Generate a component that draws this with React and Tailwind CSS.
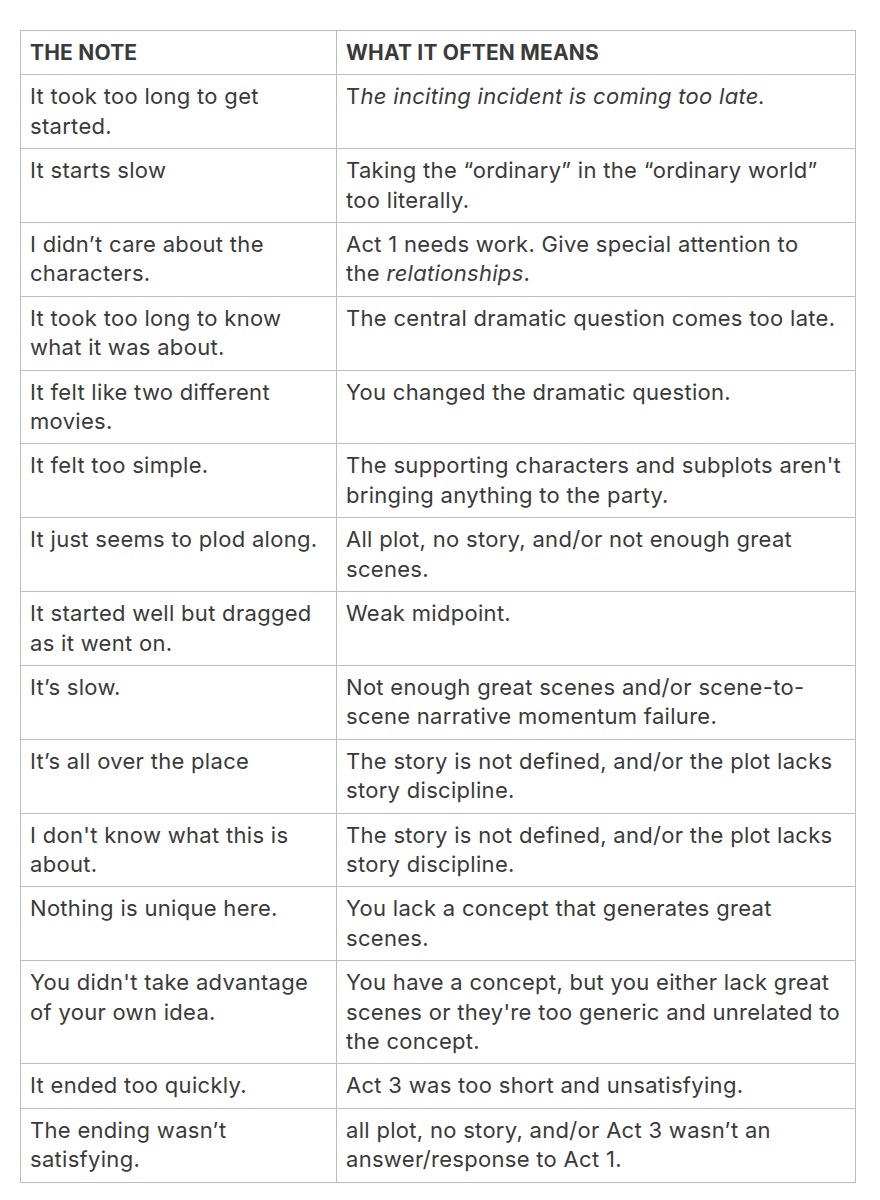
import React from "react";

const rows = [
  [["It took too long to get", "started."], [<><span>T</span><em>he inciting incident is coming too late.</em></>]],
  [["It starts slow"], ["Taking the “ordinary” in the “ordinary world”", "too literally."]],
  [["I didn’t care about the", "characters."], ["Act 1 needs work. Give special attention to", <>the <em>relationships</em>.</>]],
  [["It took too long to know", "what it was about."], ["The central dramatic question comes too late."]],
  [["It felt like two different", "movies."], ["You changed the dramatic question."]],
  [["It felt too simple."], ["The supporting characters and subplots aren't", "bringing anything to the party."]],
  [["It just seems to plod along."], ["All plot, no story, and/or not enough great", "scenes."]],
  [["It started well but dragged", "as it went on."], ["Weak midpoint."]],
  [["It’s slow."], ["Not enough great scenes and/or scene-to-", "scene narrative momentum failure."]],
  [["It’s all over the place"], ["The story is not defined, and/or the plot lacks", "story discipline."]],
  [["I don't know what this is", "about."], ["The story is not defined, and/or the plot lacks", "story discipline."]],
  [["Nothing is unique here."], ["You lack a concept that generates great", "scenes."]],
  [["You didn't take advantage", "of your own idea."], ["You have a concept, but you either lack great", "scenes or they're too generic and unrelated to", "the concept."]],
  [["It ended too quickly."], ["Act 3 was too short and unsatisfying."]],
  [["The ending wasn’t", "satisfying."], ["all plot, no story, and/or Act 3 wasn’t an", "answer/response to Act 1."]],
];

function Lines({ lines }) {
  return lines.map((l, i) => (
    <div key={i} className="whitespace-nowrap">
      {l}
    </div>
  ));
}

export default function App() {
  return (
    <div className="bg-white w-[880px] min-h-[1200px] pt-[30px] pl-[20px]" style={{ fontFamily: "Inter, 'Noto Sans', sans-serif" }}>
      <table className="border-collapse w-[836px] text-[22px] tracking-[0.3px] leading-[29.4px] text-[#3a3a3a] table-fixed">
        <colgroup>
          <col className="w-[316px]" />
          <col />
        </colgroup>
        <thead>
          <tr className="text-[21px] tracking-[0.2px]">
            <th className="border border-[#bdbdbd] px-[9px] py-[7px] text-left align-top font-bold">THE NOTE</th>
            <th className="border border-[#bdbdbd] px-[9px] py-[7px] text-left align-top font-bold">WHAT IT OFTEN MEANS</th>
          </tr>
        </thead>
        <tbody>
          {rows.map((r, i) => {
            const n = Math.max(r[0].length, r[1].length);
            return (
              <tr key={i}>
                <td className="border border-[#bdbdbd] px-[9px] py-[7px] align-top">
                  <Lines lines={r[0]} />
                  {Array.from({ length: n - r[0].length }).map((_, k) => (
                    <div key={k}>&nbsp;</div>
                  ))}
                </td>
                <td className="border border-[#bdbdbd] px-[9px] py-[7px] align-top">
                  <Lines lines={r[1]} />
                  {Array.from({ length: n - r[1].length }).map((_, k) => (
                    <div key={k}>&nbsp;</div>
                  ))}
                </td>
              </tr>
            );
          })}
        </tbody>
      </table>
    </div>
  );
}
